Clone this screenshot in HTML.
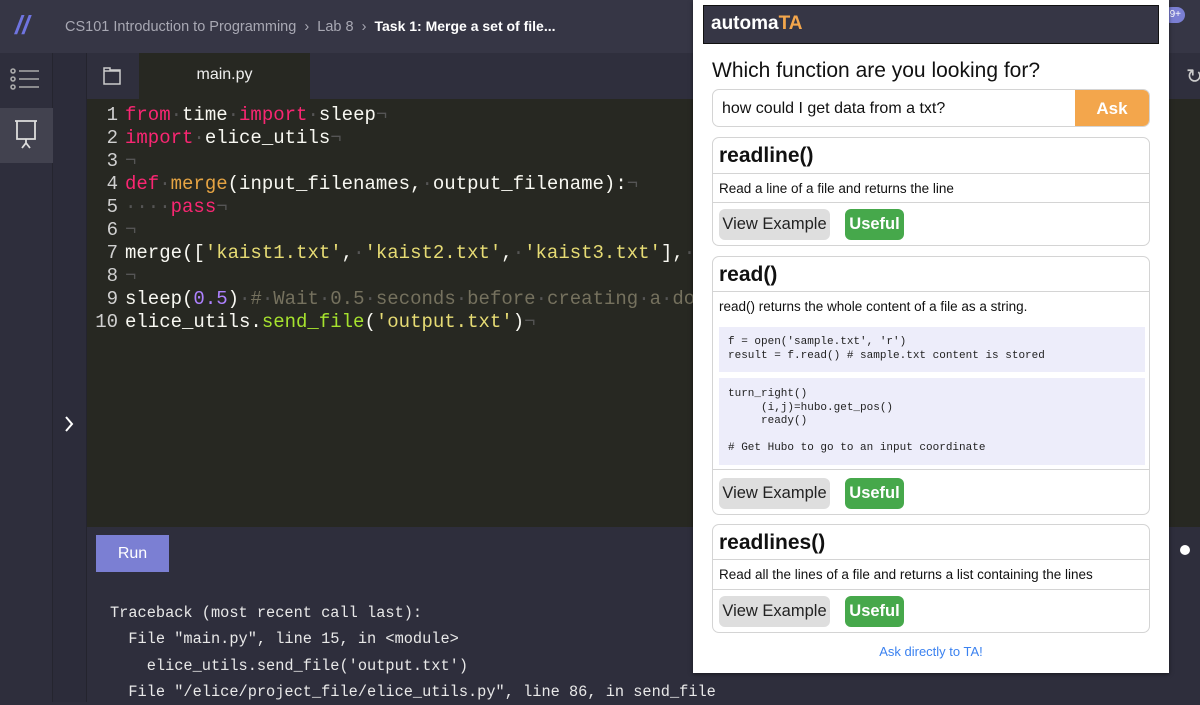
<!DOCTYPE html>
<html><head><meta charset="utf-8"><style>
*{margin:0;padding:0;box-sizing:border-box}
body{width:1200px;height:702px;overflow:hidden;background:#2e2e3c;font-family:"Liberation Sans",sans-serif;position:relative}
.a{position:absolute}
.mono{font-family:"Liberation Mono",monospace}
.code div{height:23px;line-height:23px;white-space:pre;font-size:19px;color:#f8f8f2}
.ln{display:inline-block;width:36px;text-align:right;color:#d0d0d0;margin-right:7px}
.k{color:#f92672}.f{color:#e6a443}.s{color:#e6db74}.n{color:#ae81ff}.c{color:#75715e}.g{color:#a6e22e}.w{color:#555}
.card{position:absolute;left:712px;width:438px;border:1px solid #d4d4d4;border-radius:7px;background:#fff}
.ct{font-weight:bold;font-size:21px;color:#111;padding-left:6px;border-bottom:1px solid #d4d4d4}
.cd{font-size:13.5px;color:#111;padding-left:6px;border-bottom:1px solid #d4d4d4}
.btn{position:absolute;height:31px;line-height:31px;border-radius:6px;font-size:16.5px}
.ve{left:6px;width:111px;background:#dedede;color:#222;text-align:center}
.us{left:132px;width:59px;background:#46a84b;color:#fff;text-align:center;font-weight:bold}
.ex{position:absolute;left:6px;width:426px;background:#ededfa;font-size:11px;line-height:13.5px;white-space:pre;color:#222;padding-left:9px}
.tb{font-size:15.3px;color:#e8e8e8;line-height:26.3px;white-space:pre}
</style></head><body>
<div class="a" style="left:0;top:0;width:1200px;height:53px;background:#363645"></div>
<div class="a" style="left:15px;top:10px;color:#6f74e0;font-size:26px;font-style:italic;font-weight:bold">//</div>
<div class="a" style="left:65px;top:18px;font-size:14.5px;color:#a8a8b3">CS101 Introduction to Programming &nbsp;›&nbsp; Lab 8 &nbsp;›&nbsp; <span style="color:#fff;font-weight:bold;font-size:14px">Task 1: Merge a set of file...</span></div>
<div class="a" style="left:0;top:53px;width:53px;height:649px;background:#2e2e3c;border-right:1px solid #25252f"></div>
<div class="a" style="left:0;top:108px;width:53px;height:55px;background:#42424f"></div>
<svg class="a" style="left:10px;top:68px" width="30" height="24" viewBox="0 0 30 24" fill="none" stroke="#aaa" stroke-width="1.6"><circle cx="3" cy="3" r="2"/><circle cx="3" cy="11" r="2"/><circle cx="3" cy="19" r="2"/><path d="M9 3h20M9 11h20M9 19h20"/></svg>
<svg class="a" style="left:14px;top:119px" width="24" height="32" viewBox="0 0 24 32" fill="none" stroke="#ddd" stroke-width="1.8"><path d="M1 2h22M3 2v18h18V2M12 20v4M8 29l4-5 4 5"/></svg>
<div class="a" style="left:53px;top:53px;width:34px;height:649px;background:#2c2c3a;border-right:1px solid #24242e"></div>
<svg class="a" style="left:64px;top:416px" width="10" height="16" viewBox="0 0 10 16" fill="none" stroke="#fff" stroke-width="2"><path d="M2 1l6 7-6 7"/></svg>
<div class="a" style="left:87px;top:53px;width:1113px;height:46px;background:#2f2f3d"></div>
<svg class="a" style="left:102px;top:66px" width="20" height="20" viewBox="0 0 20 20" fill="none" stroke="#ccc" stroke-width="1.5"><path d="M2 2h6v2h10v14H2zM2 5h16"/></svg>
<div class="a" style="left:139px;top:53px;width:171px;height:46px;background:#272822"></div>
<div class="a" style="left:139px;top:66px;width:171px;text-align:center;font-size:16px;color:#eee">main.py</div>
<div class="a" style="left:87px;top:99px;width:1113px;height:428px;background:#272822"></div>
<div class="a code mono" style="left:82px;top:104px">
<div><span class="ln">1</span><span class="k">from</span><span class="w">·</span>time<span class="w">·</span><span class="k">import</span><span class="w">·</span>sleep<span class="w">¬</span></div>
<div><span class="ln">2</span><span class="k">import</span><span class="w">·</span>elice_utils<span class="w">¬</span></div>
<div><span class="ln">3</span><span class="w">¬</span></div>
<div><span class="ln">4</span><span class="k">def</span><span class="w">·</span><span class="f">merge</span>(input_filenames,<span class="w">·</span>output_filename):<span class="w">¬</span></div>
<div><span class="ln">5</span><span class="w">····</span><span class="k">pass</span><span class="w">¬</span></div>
<div><span class="ln">6</span><span class="w">¬</span></div>
<div><span class="ln">7</span>merge([<span class="s">'kaist1.txt'</span>,<span class="w">·</span><span class="s">'kaist2.txt'</span>,<span class="w">·</span><span class="s">'kaist3.txt'</span>],<span class="w">·</span></div>
<div><span class="ln">8</span><span class="w">¬</span></div>
<div><span class="ln">9</span>sleep(<span class="n">0.5</span>)<span class="c"><span class="w">·</span>#<span class="w">·</span>Wait<span class="w">·</span>0.5<span class="w">·</span>seconds<span class="w">·</span>before<span class="w">·</span>creating<span class="w">·</span>a<span class="w">·</span>do</span></div>
<div><span class="ln">10</span>elice_utils.<span class="g">send_file</span>(<span class="s">'output.txt'</span>)<span class="w">¬</span></div>
</div>
<div class="a" style="left:96px;top:535px;width:73px;height:37px;background:#7b7fd3;color:#fff;font-size:16px;text-align:center;line-height:37px">Run</div>
<div class="a tb mono" style="left:110px;top:600px">Traceback (most recent call last):
  File "main.py", line 15, in &lt;module&gt;
    elice_utils.send_file('output.txt')
  File "/elice/project_file/elice_utils.py", line 86, in send_file</div>
<div class="a" style="left:1180px;top:545px;width:10px;height:10px;border-radius:50%;background:#fff"></div>
<div class="a" style="left:1163px;top:7px;width:22px;height:16px;border-radius:8px;background:#7b7fd3;color:#fff;font-size:10px;text-align:right;padding-right:4px;line-height:16px">9+</div>
<div class="a" style="left:1186px;top:64px;color:#ccc;font-size:20px">↻</div>
<!-- popup -->
<div class="a" style="left:693px;top:0;width:476px;height:673px;background:#fff;box-shadow:0 1px 4px rgba(0,0,0,.5)"></div>
<div class="a" style="left:703px;top:5px;width:456px;height:39px;background:#363645;border:1px solid #111"></div>
<div class="a" style="left:711px;top:13px;font-size:19px;font-weight:bold;color:#fff">automa<span style="color:#f3a64c">TA</span></div>
<div class="a" style="left:712px;top:59px;font-size:21px;color:#111">Which function are you looking for?</div>
<div class="a" style="left:712px;top:89px;width:438px;height:38px;border:1px solid #d4d4d4;border-radius:7px;overflow:hidden">
<div class="a" style="left:9px;top:10px;font-size:16px;color:#111">how could I get data from a txt?</div>
<div class="a" style="right:0;top:0;width:74px;height:38px;background:#f3a64c;color:#fff;font-weight:bold;font-size:17px;text-align:center;line-height:37px">Ask</div></div>
<div class="card" style="top:137px;height:109px">
<div class="ct" style="height:36px;line-height:36px">readline()</div>
<div class="cd" style="height:29px;line-height:29px">Read a line of a file and returns the line</div>
<div class="btn ve" style="top:71px">View Example</div><div class="btn us" style="top:71px">Useful</div></div>
<div class="card" style="top:256px;height:259px">
<div class="ct" style="height:35px;line-height:35px">read()</div>
<div class="cd" style="height:30px;line-height:30px;border:none">read() returns the whole content of a file as a string.</div>
<div class="ex mono" style="top:70px;height:45px;padding-top:9px">f = open('sample.txt', 'r')
result = f.read() # sample.txt content is stored</div>
<div class="ex mono" style="top:121px;height:87px;padding-top:10px">turn_right()
     (i,j)=hubo.get_pos()
     ready()

# Get Hubo to go to an input coordinate</div>
<div class="a" style="left:0;top:212px;width:436px;border-top:1px solid #d4d4d4"></div>
<div class="btn ve" style="top:221px">View Example</div><div class="btn us" style="top:221px">Useful</div></div>
<div class="card" style="top:524px;height:109px">
<div class="ct" style="height:35px;line-height:35px">readlines()</div>
<div class="cd" style="height:30px;line-height:30px">Read all the lines of a file and returns a list containing the lines</div>
<div class="btn ve" style="top:71px">View Example</div><div class="btn us" style="top:71px">Useful</div></div>
<div class="a" style="left:693px;top:644px;width:476px;text-align:center;font-size:13px;color:#3b82f0">Ask directly to TA!</div>
</body></html>
